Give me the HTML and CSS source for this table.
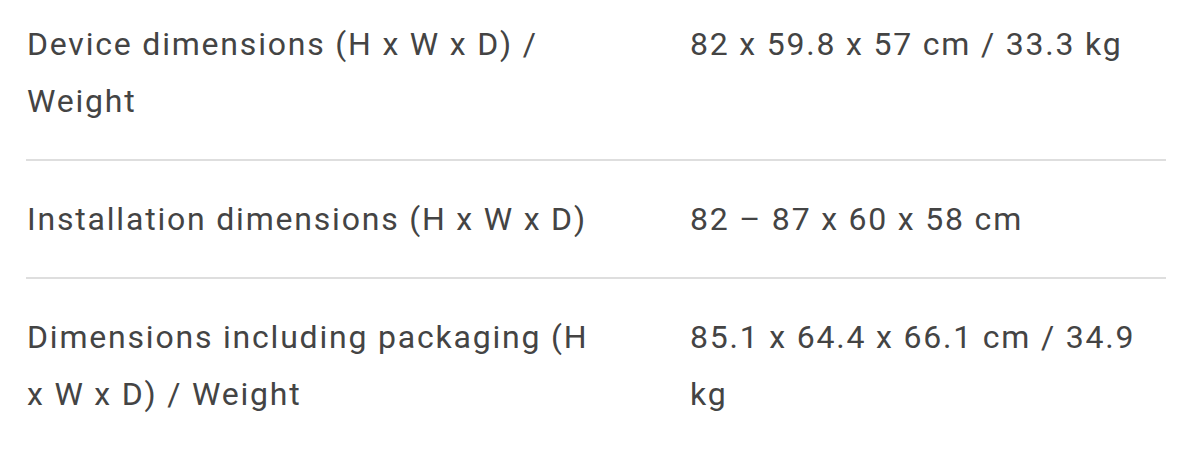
FILE: index.html
```html
<!DOCTYPE html>
<html lang="en">
<head>
<meta charset="utf-8">
<link rel="stylesheet" href="styles.css">
</head>
<body>
<div class="specs">
  <div class="row first">
    <div class="label">Device dimensions (H x W x D) / Weight</div>
    <div class="value">82 x 59.8 x 57 cm / 33.3 kg</div>
  </div>
  <div class="row">
    <div class="label">Installation dimensions (H x W x D)</div>
    <div class="value">82 – 87 x 60 x 58 cm</div>
  </div>
  <div class="row last">
    <div class="label">Dimensions including packaging (H x W x D) / Weight</div>
    <div class="value">85.1 x 64.4 x 66.1 cm / 34.9 kg</div>
  </div>
</div>
</body>
</html>
```
FILE: styles.css
```css
html, body {
  margin: 0;
  padding: 0;
  background: #fff;
}
.specs {
  width: 1140px;
  margin-left: 26px;
  font-family: Roboto, "Liberation Sans", sans-serif;
  font-size: 32px;
  letter-spacing: 1.8px;
  line-height: 57px;
  color: #444444;
}
.row {
  display: grid;
  grid-template-columns: 664px 1fr;
  padding: 30px 0 29px;
  border-bottom: 2px solid #dedede;
}
.row.first {
  padding-top: 16px;
}
.row.last {
  border-bottom: none;
}
.label {
  padding-left: 1px;
  padding-right: 84px;
}
.value {
  padding-right: 20px;
}
```
